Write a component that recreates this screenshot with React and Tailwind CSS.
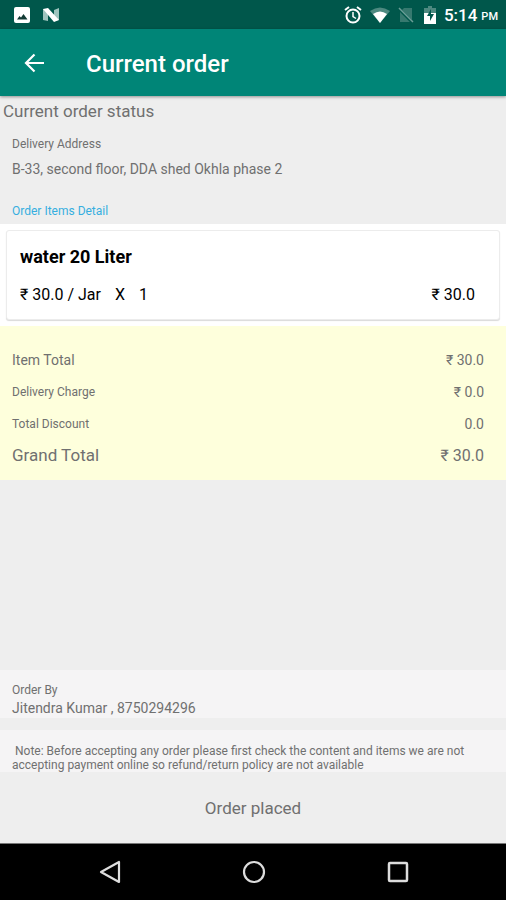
import React from "react";

const order = {
  address: "B-33, second floor, DDA shed Okhla phase 2",
  customer: "Jitendra Kumar , 8750294296",
  status: "Order placed",
  items: [
    { name: "water 20 Liter", price: "₹ 30.0", unit: "Jar", quantity: 1, total: "₹ 30.0" },
  ],
};

const StatusBar = () => (
  <div className="flex h-[29px] items-center justify-between bg-[#00574b] pl-[14px] pr-2 text-white">
    <div className="flex items-center gap-3 pt-px">
      <svg className="h-4 w-4" viewBox="0 0 16 16">
        <rect width="16" height="16" rx="2" fill="#fff" />
        <path d="M3 12.500l2.500-3.500 1.500 1.500 2.500-3.500 4 5.500z" fill="#123b34" />
      </svg>
      <svg className="h-4 w-[18px]" viewBox="0 0 18 16">
        <path d="M1 2l5 0v12l-5-1zM12 3l5-2v12l-5 1z" fill="#9fc4be" />
        <path d="M1 2l5-1 11 12-5 2z" fill="#fff" />
      </svg>
    </div>
    <div className="flex items-center pt-px">
      <svg className="h-[18px] w-[18px]" viewBox="0 0 18 18" fill="none" stroke="#fff" strokeWidth="2">
        <circle cx="9" cy="10" r="6.500" />
        <path d="M1 4l4-3M17 4l-4-3" />
        <path d="M9 6v4.500l3 2" strokeWidth="1.500" />
      </svg>
      <svg className="ml-2 h-4 w-5" viewBox="0 0 20 16">
        <path d="M0 4Q10-3 20 4L10 16z" fill="#4d8980" />
        <path d="M3 7Q10 2 17 7L10 16z" fill="#fff" />
      </svg>
      <svg className="ml-2 h-4 w-4" viewBox="0 0 16 16">
        <path d="M6 1h8v14H2V5z" fill="#36796f" />
        <path d="M0 1l15 15" stroke="#00574b" strokeWidth="3" />
        <path d="M1 1l14 14" stroke="#6b9e97" strokeWidth="1.500" />
      </svg>
      <svg className="ml-[10px] h-[18px] w-3" viewBox="0 0 12 18">
        <path d="M0 2h4V0h4v2h4v6H0z" fill="#4d8980" />
        <path d="M0 7h12v11H0z" fill="#fff" />
        <path d="M7 3L3 10h3v5l4-7H7z" fill="#00574b" />
      </svg>
      <span className="ml-2 text-[17px] leading-5 font-medium">5:14</span>
      <span className="ml-1 pt-1 text-[11px] leading-4 font-medium">PM</span>
    </div>
  </div>
);

const AppBar = () => (
  <header className="z-10 flex h-[67px] items-center bg-[#008577] pl-6 text-white shadow-[0_1px_3px_rgba(0,0,0,0.4)]">
    <button type="button" aria-label="Back">
      <svg className="h-5 w-5" viewBox="0 0 20 20" fill="none" stroke="#fff" strokeWidth="2.200">
        <path d="M20 10H2M10.500 1.500L2 10l8.500 8.500" />
      </svg>
    </button>
    <h1 className="ml-[42px] pt-[2px] text-2xl leading-8 font-medium">Current order</h1>
  </header>
);

const ItemCard = ({ item }) => (
  <div className="rounded-[3px] border border-[#ececec] bg-white py-3 pr-6 pl-[13px] text-black shadow-[0_1px_1px_rgba(0,0,0,0.15)]">
    <h2 className="text-lg leading-7 font-bold">{item.name}</h2>
    <div className="mt-3 flex justify-between text-base leading-6">
      <p className="flex gap-[14px]">
        <span>
          {item.price} / {item.unit}
        </span>
        <span>X</span>
        <span>{item.quantity}</span>
      </p>
      <p>{item.total}</p>
    </div>
  </div>
);

const TotalsTable = () => (
  <section className="bg-[#feffdc] pt-[18px] pr-[22px] pb-2 pl-3">
    <table className="w-full">
      <tbody>
        <tr className="h-8">
          <th scope="row" className="text-left text-sm font-normal">Item Total</th>
          <td className="text-right text-sm">₹ 30.0</td>
        </tr>
        <tr className="h-8">
          <th scope="row" className="text-left text-xs font-normal">Delivery Charge</th>
          <td className="text-right text-sm">₹ 0.0</td>
        </tr>
        <tr className="h-8">
          <th scope="row" className="text-left text-xs font-normal">Total Discount</th>
          <td className="text-right text-sm">0.0</td>
        </tr>
        <tr className="h-8">
          <th scope="row" className="text-left text-[17px] font-normal">Grand Total</th>
          <td className="text-right text-base">₹ 30.0</td>
        </tr>
      </tbody>
    </table>
  </section>
);

const NavigationBar = () => (
  <nav className="flex h-[57px] items-center justify-around border-t border-[#777] bg-black pr-9 pl-[38px]">
    <button type="button" aria-label="Back">
      <svg className="h-6 w-6" viewBox="0 0 24 24" fill="none" stroke="#ddd" strokeWidth="2.200" strokeLinejoin="round">
        <path d="M21 2v20L3 12z" />
      </svg>
    </button>
    <button type="button" aria-label="Home">
      <svg className="h-6 w-6" viewBox="0 0 24 24" fill="none" stroke="#ddd" strokeWidth="2.200">
        <circle cx="12" cy="12" r="10" />
      </svg>
    </button>
    <button type="button" aria-label="Recent apps">
      <svg className="h-6 w-6" viewBox="0 0 24 24" fill="none" stroke="#ddd" strokeWidth="2.500">
        <rect x="3" y="3" width="18" height="18" rx="1" />
      </svg>
    </button>
  </nav>
);

const App = () => {
  return (
    <div className="flex min-h-screen flex-col bg-[#eeeeee] font-['Roboto',sans-serif] text-[#707070]">
      <StatusBar />
      <AppBar />

      <main className="flex flex-1 flex-col">
        <p className="pt-[3px] pl-[3px] text-[17px] leading-6">Current order status</p>
        <section className="px-3 pt-3">
          <h2 className="text-xs leading-[18px]">Delivery Address</h2>
          <p className="mt-[6px] text-sm leading-5">{order.address}</p>
          <h2 className="mt-6 mb-[5px] text-xs leading-4 text-[#36aee0]">Order Items Detail</h2>
        </section>

        <section className="bg-white px-[6px] pt-[6px] pb-[6px]">
          {order.items.map((item) => (
            <ItemCard key={item.name} item={item} />
          ))}
        </section>

        <TotalsTable />

        <div className="mt-auto">
          <section className="bg-[#f5f4f5] px-3 pt-3">
            <h2 className="text-xs leading-4">Order By</h2>
            <p className="text-sm leading-5">{order.customer}</p>
          </section>
          <p className="mt-3 bg-[#f5f4f5] pt-[14px] pr-8 pl-3 text-xs leading-[14px] whitespace-pre-wrap">
            {" Note: Before accepting any order please first check the content and items we are not accepting payment online so refund/return policy are not available"}
          </p>
          <p className="pt-6 pb-[23px] text-center text-[17px] leading-6">{order.status}</p>
        </div>
      </main>

      <NavigationBar />
    </div>
  );
};

export default App;
